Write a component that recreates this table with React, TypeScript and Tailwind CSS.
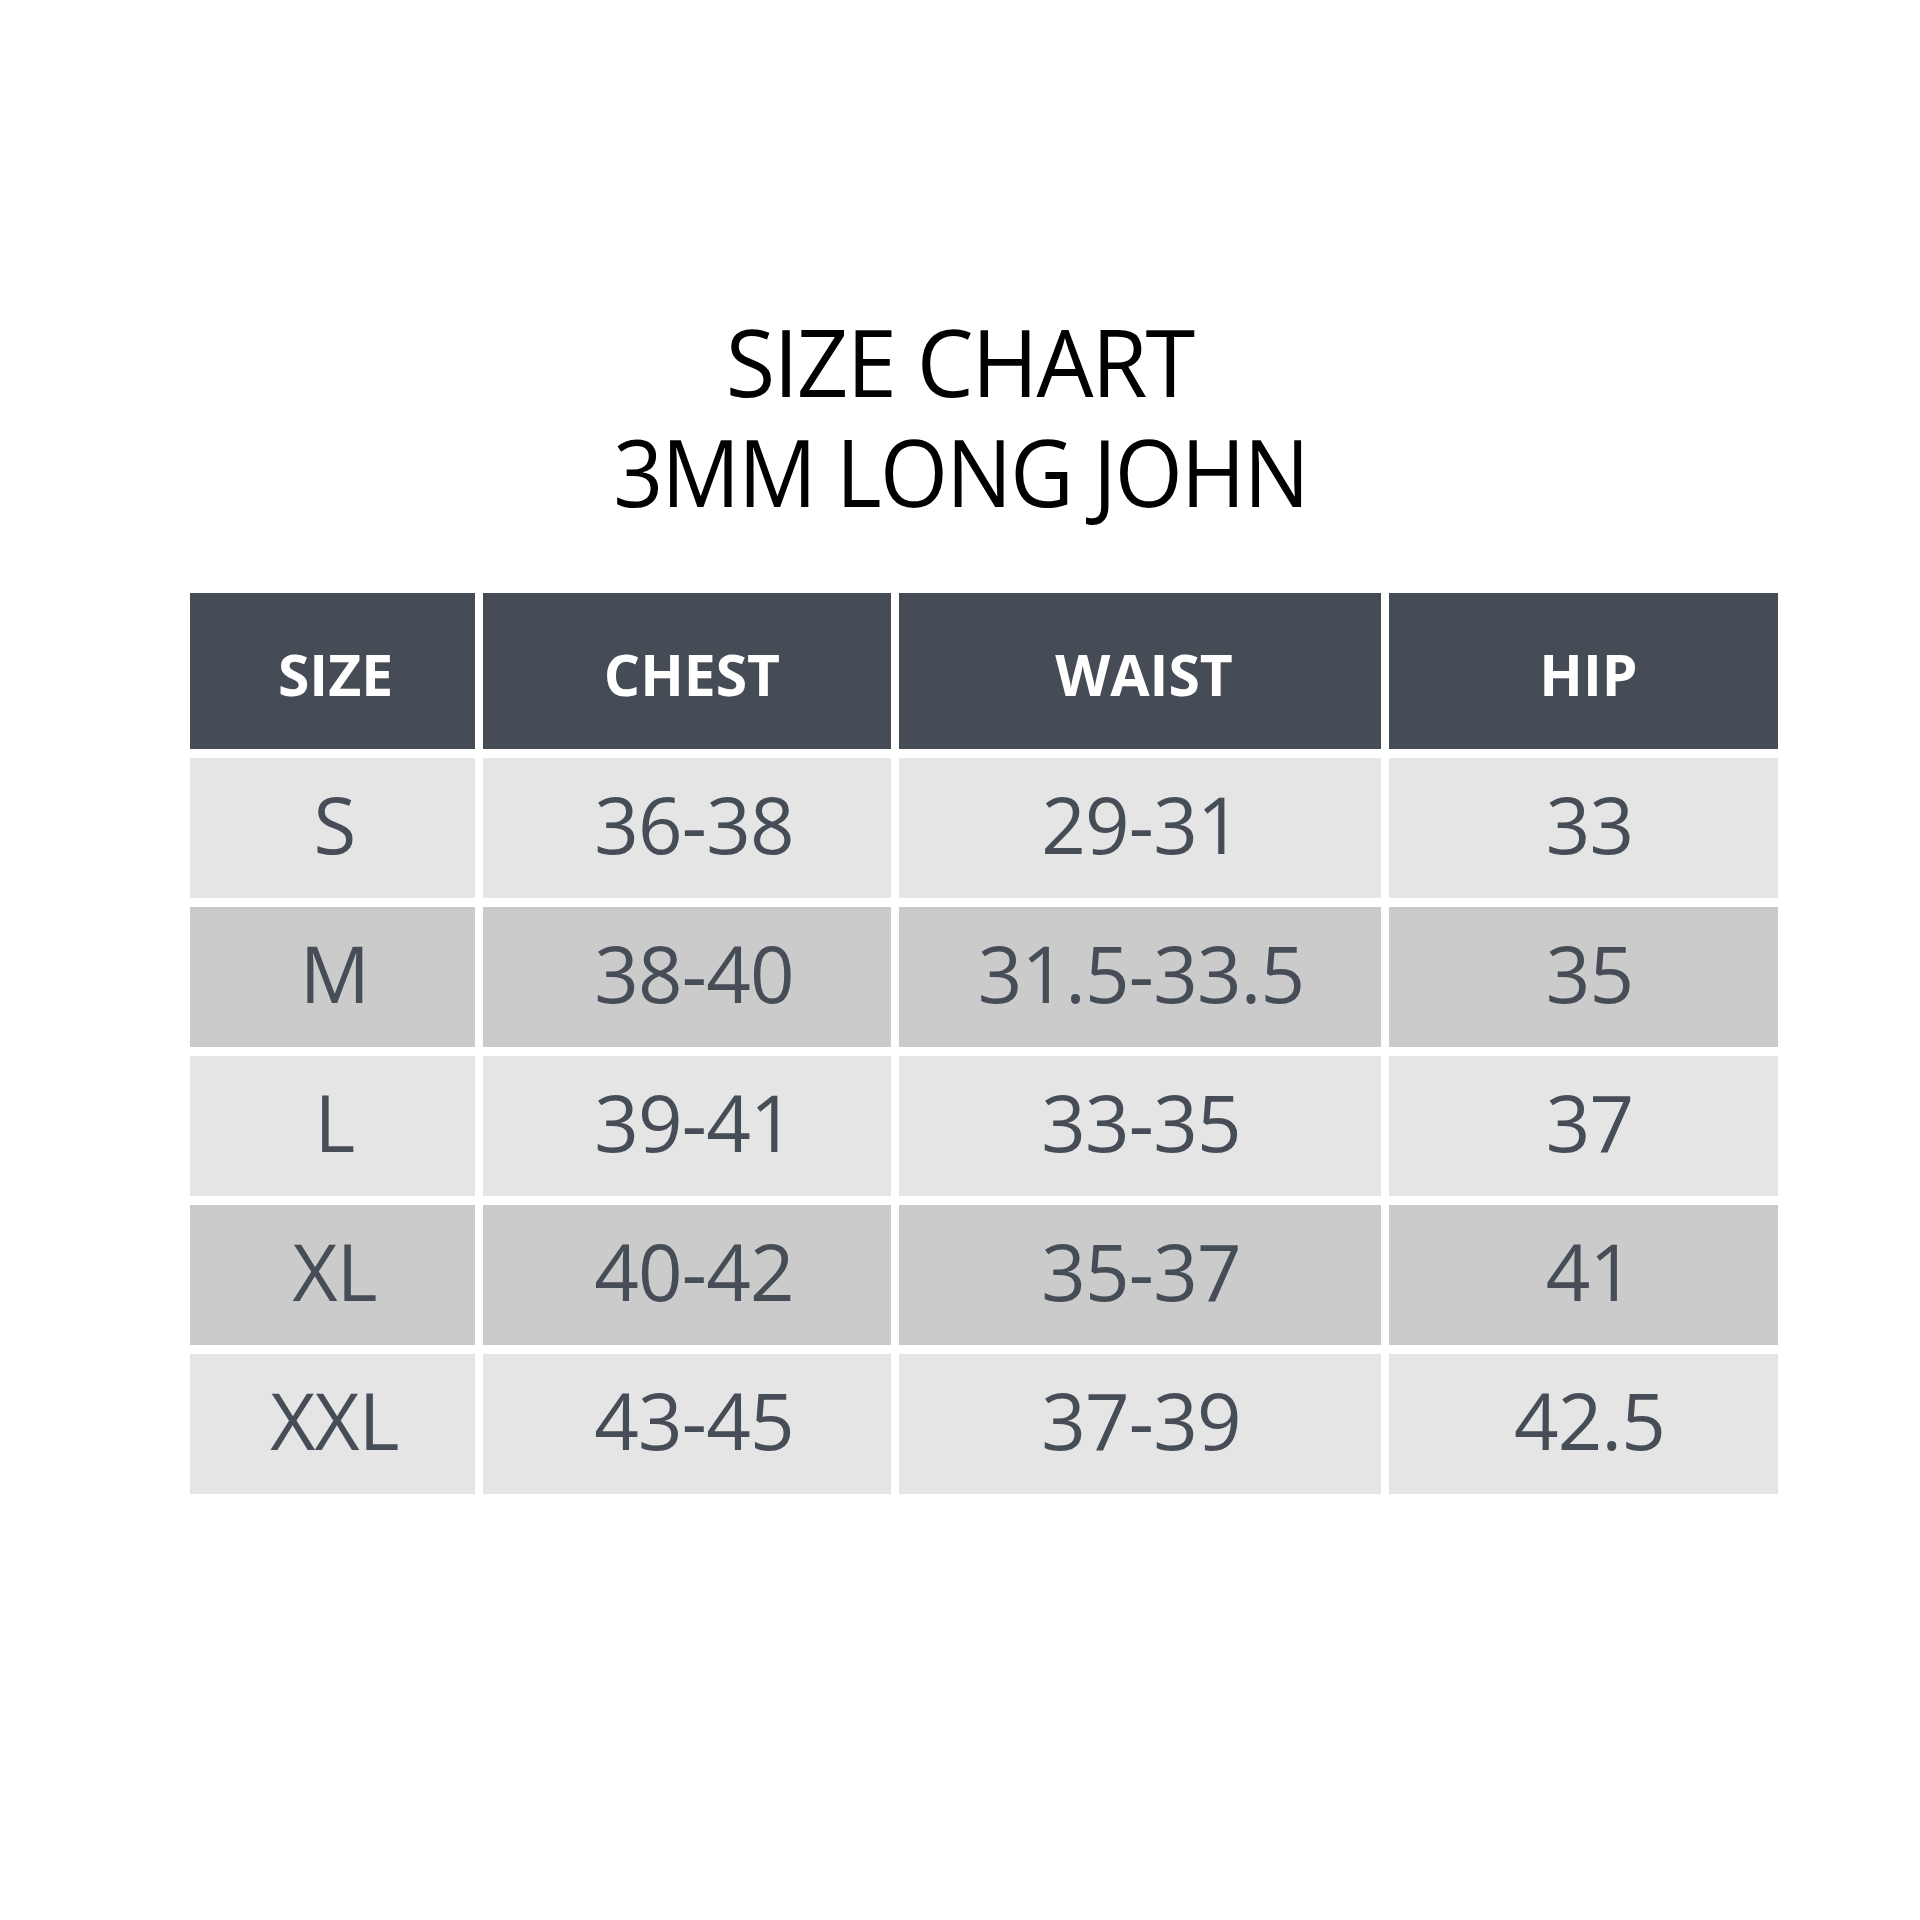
import React from 'react';

const headers = ['SIZE', 'CHEST', 'WAIST', 'HIP'];

const rows: string[][] = [
  ['S', '36-38', '29-31', '33'],
  ['M', '38-40', '31.5-33.5', '35'],
  ['L', '39-41', '33-35', '37'],
  ['XL', '40-42', '35-37', '41'],
  ['XXL', '43-45', '37-39', '42.5'],
];

// small per-column nudges, the source art isn't perfectly centred
const colPad = ['pl-[4px]', 'pl-[14px]', 'pl-[2px]', 'pl-[12px]'];
const headPad = ['pl-[6px]', 'pl-[10px]', 'pl-[8px]', 'pl-[10px]'];

const App: React.FC = () => {
  return (
    <div className="w-[1920px] h-[1920px] bg-white pt-[306px] font-['Open_Sans',sans-serif]">
      <h1 className="flex flex-col items-center text-black text-[94px] leading-[110px] font-normal tracking-[-0.02em]">
        <span className="scale-x-[0.96]">SIZE CHART</span>
        <span className="scale-x-[0.93]">3MM LONG JOHN</span>
      </h1>

      <div className="mt-[67px] ml-[190px] grid grid-cols-[285px_408px_482px_389px] gap-x-[8px] gap-y-[9px]">
        {headers.map((h, j) => (
          <div
            key={h}
            className={`h-[156px] bg-[#454c55] flex items-center justify-center pt-[8px] text-white text-[57px] font-bold ${headPad[j]}`}
          >
            {h}
          </div>
        ))}
        {rows.map((row, i) =>
          row.map((cell, j) => (
            <div
              key={`${i}-${j}`}
              className={`h-[140px] flex items-center justify-center pb-[8px] text-[#464d56] text-[78px] tracking-[-0.01em] ${colPad[j]} ${
                i % 2 === 0 ? 'bg-[#e5e5e5]' : 'bg-[#cbcbcb]'
              }`}
            >
              {cell}
            </div>
          ))
        )}
      </div>
    </div>
  );
};

export default App;
